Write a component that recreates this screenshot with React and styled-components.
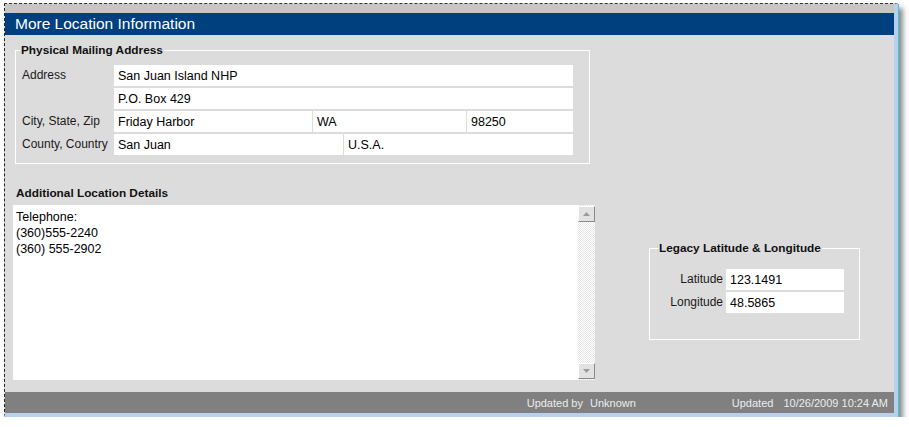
import React from 'react';
import styled, { createGlobalStyle } from 'styled-components';

const GlobalStyle = createGlobalStyle`
  body {
    margin: 0;
    background: #ffffff;
    font-family: "Liberation Sans", Arial, sans-serif;
  }
`;

const Page = styled.div`
  padding: 3px 0 0 4px;
`;

const Frame = styled.div`
  box-sizing: border-box;
  width: 894px;
  display: flex;
  flex-direction: column;
  background: #dcdcdc;
  border-top: 1px dashed #333;
  border-left: 1px dashed #222;
  border-right: 4px solid #b8d0ec;
  border-bottom: 4px solid #b8d0ec;
  box-shadow: 1px 1px 0 #3cc6dc, 5px 5px 5px rgba(0, 0, 0, 0.45);
`;

const TopStrip = styled.div`
  height: 9px;
  background: #c6c6c6;
`;

const TitleBar = styled.div`
  height: 22px;
  display: flex;
  align-items: center;
  padding-left: 10px;
  background: #00407e;
  color: #ffffff;
  font-size: 15.5px;
`;

const Body = styled.div`
  height: 357px;
  box-sizing: border-box;
  padding: 8px 0 0 8px;
`;

const Fieldset = styled.fieldset`
  box-sizing: border-box;
  width: ${(p) => p.$width}px;
  margin: 0 0 0 ${(p) => p.$offset || 0}px;
  border: 1px solid #ffffff;
  padding: ${(p) => p.$padding};
  min-inline-size: auto;
`;

const Legend = styled.legend`
  padding: 0 1px;
  margin-left: ${(p) => p.$shift}px;
  font-size: 11.8px;
  font-weight: bold;
  line-height: 14px;
  color: #111;
`;

const AddressGrid = styled.div`
  display: grid;
  grid-template-columns: 92px 459px;
  grid-auto-rows: 21px;
  row-gap: 2px;
`;

const Label = styled.div`
  font-size: 12px;
  color: #1a1a1a;
  padding-top: 3px;
  white-space: nowrap;
`;

const CellRow = styled.div`
  display: flex;
  gap: 1px;
`;

const Cell = styled.div`
  box-sizing: border-box;
  width: ${(p) => (p.$width ? `${p.$width}px` : 'auto')};
  flex: ${(p) => (p.$width ? 'none' : '1')};
  height: 21px;
  display: flex;
  align-items: center;
  padding-left: 4px;
  background: #ffffff;
  font-size: 12.5px;
  color: #000;
  white-space: nowrap;
`;

const Lower = styled.div`
  display: flex;
  align-items: flex-start;
`;

const DetailsColumn = styled.div`
  width: 582px;
  display: flex;
  flex-direction: column;
`;

const SectionTitle = styled.div`
  margin: 22px 0 5px 3px;
  font-size: 11.8px;
  font-weight: bold;
  line-height: 14px;
  color: #111;
`;

const TextBox = styled.div`
  height: 175px;
  display: flex;
  background: #ffffff;
`;

const TextContent = styled.div`
  flex: 1;
  padding: 4px 3px;
  font-size: 12.5px;
  line-height: 16px;
  color: #000;
`;

const ScrollBar = styled.div`
  width: 17px;
  display: flex;
  flex-direction: column;
  justify-content: space-between;
  padding: 1px 0;
  background: repeating-conic-gradient(#e6e6e6 0 25%, #ffffff 0 50%) 0 0 / 2px 2px;
`;

const ScrollButton = styled.div`
  box-sizing: border-box;
  height: 16px;
  display: flex;
  align-items: center;
  justify-content: center;
  background: #e2e2e2;
  border: 1px solid;
  border-color: #ffffff #8a8a8a #8a8a8a #ffffff;
`;

const LegacyWrap = styled.div`
  margin: 77px 0 0 54px;
`;

const CoordGrid = styled.div`
  display: grid;
  grid-template-columns: 69px 118px;
  grid-auto-rows: 21px;
  column-gap: 3px;
  row-gap: 2px;
`;

const CoordLabel = styled.div`
  align-self: center;
  padding-bottom: 2px;
  text-align: right;
  font-size: 12px;
  color: #1a1a1a;
`;

const Footer = styled.div`
  height: 21px;
  display: flex;
  align-items: center;
  justify-content: flex-end;
  gap: 96px;
  padding-right: 6px;
  background: #808080;
  color: #ececec;
  font-size: 11px;
`;

const FooterItem = styled.div`
  display: flex;
`;

const FooterValue = styled.span`
  margin-left: ${(p) => p.$gap}px;
`;

const Arrow = ({ down }) => (
  <svg width="7" height="4" viewBox="0 0 7 4">
    <polygon points={down ? '0,0 7,0 3.5,4' : '0,4 7,4 3.5,0'} fill="#9a9a9a" />
  </svg>
);

const App = () => (
  <>
    <GlobalStyle />
    <Page>
      <Frame>
        <TopStrip />
        <TitleBar>More Location Information</TitleBar>
        <Body>
          <Fieldset $width={575} $offset={2} $padding="8px 15px 8px 6px">
            <Legend $shift={-2}>Physical Mailing Address</Legend>
            <AddressGrid>
              <Label>Address</Label>
              <Cell>San Juan Island NHP</Cell>
              <Label />
              <Cell>P.O. Box 429</Cell>
              <Label>City, State, Zip</Label>
              <CellRow>
                <Cell $width={198}>Friday Harbor</Cell>
                <Cell $width={153}>WA</Cell>
                <Cell>98250</Cell>
              </CellRow>
              <Label>County, Country</Label>
              <CellRow>
                <Cell $width={229}>San Juan</Cell>
                <Cell>U.S.A.</Cell>
              </CellRow>
            </AddressGrid>
          </Fieldset>
          <Lower>
            <DetailsColumn>
              <SectionTitle>Additional Location Details</SectionTitle>
              <TextBox>
                <TextContent>
                  Telephone:
                  <br />
                  (360)555-2240
                  <br />
                  (360) 555-2902
                </TextContent>
                <ScrollBar>
                  <ScrollButton>
                    <Arrow />
                  </ScrollButton>
                  <ScrollButton>
                    <Arrow down />
                  </ScrollButton>
                </ScrollBar>
              </TextBox>
            </DetailsColumn>
            <LegacyWrap>
              <Fieldset $width={211} $padding="14px 15px 26px 4px">
                <Legend $shift={4}>Legacy Latitude &amp; Longitude</Legend>
                <CoordGrid>
                  <CoordLabel>Latitude</CoordLabel>
                  <Cell>123.1491</Cell>
                  <CoordLabel>Longitude</CoordLabel>
                  <Cell>48.5865</Cell>
                </CoordGrid>
              </Fieldset>
            </LegacyWrap>
          </Lower>
        </Body>
        <Footer>
          <FooterItem>
            Updated by<FooterValue $gap={7}>Unknown</FooterValue>
          </FooterItem>
          <FooterItem>
            Updated<FooterValue $gap={10}>10/26/2009 10:24 AM</FooterValue>
          </FooterItem>
        </Footer>
      </Frame>
    </Page>
  </>
);

export default App;
